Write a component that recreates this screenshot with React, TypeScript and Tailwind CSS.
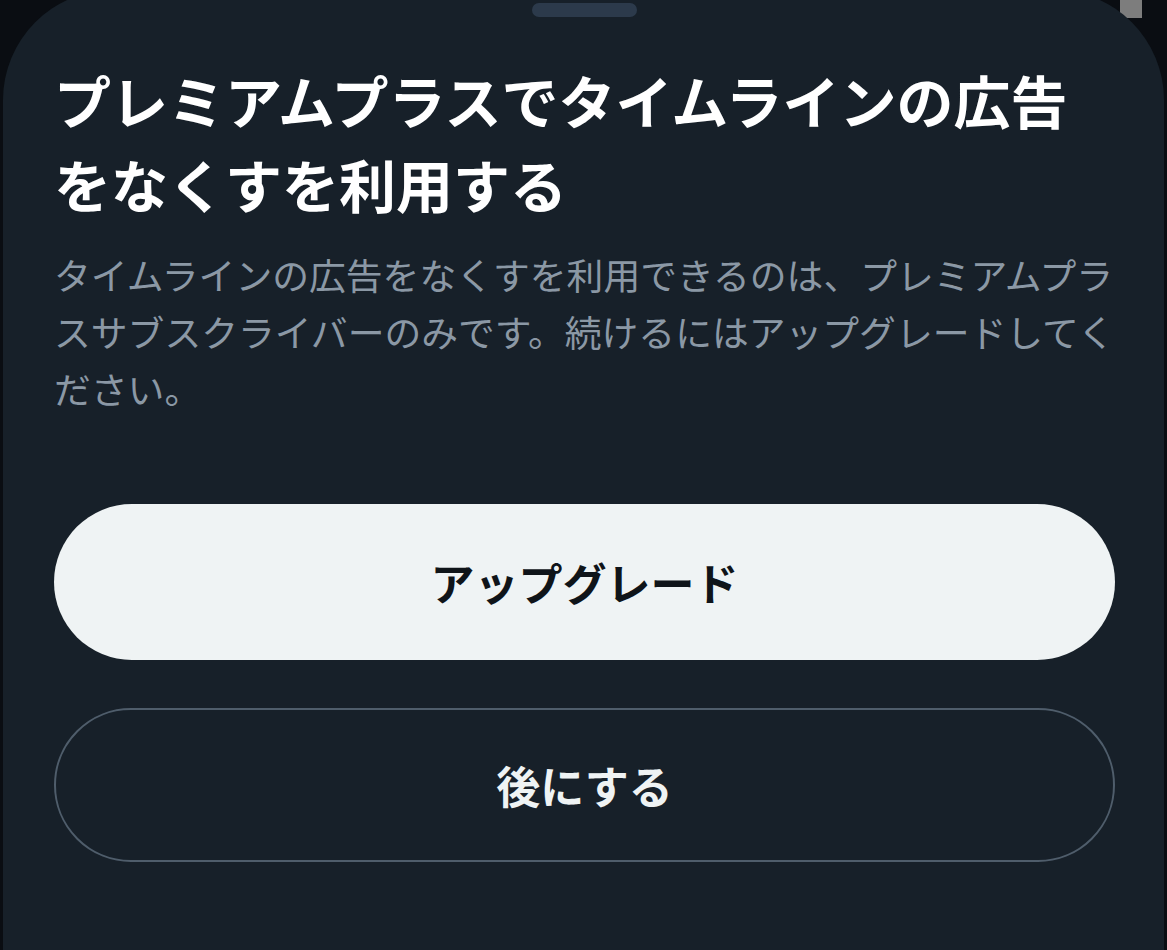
import React from "react";

export default function App() {
  const font = {
    fontFamily: '"Noto Sans CJK JP", "Noto Sans", sans-serif',
  } as React.CSSProperties;
  return (
    <div
      className="relative w-full h-[950px] overflow-hidden bg-[#0a0d12]"
      style={font}
    >
      <div className="absolute top-0 right-[25px] w-[22px] h-[18px] bg-[#7d7d7d]" />
      <div className="relative mx-[3px] mt-[-10px] h-[960px] rounded-t-[110px] bg-[#172029] pl-[51px] pr-[49px] flex flex-col">
        <div className="flex justify-center pt-[13px]">
          <div className="w-[105px] h-[14px] rounded-full bg-[#2c3a4b]" />
        </div>
        <h1 className="mt-[40px] text-[57px] leading-[84px] font-bold text-white">
          <span className="block whitespace-nowrap">
            プレミアムプラスでタイムラインの広告
          </span>
          <span className="block whitespace-nowrap">をなくすを利用する</span>
        </h1>
        <p className="mt-[21px] text-[36.8px] leading-[57px] text-[#8b98a5]">
          <span className="block whitespace-nowrap">
            タイムラインの広告をなくすを利用できるのは、プレミアムプラ
          </span>
          <span className="block whitespace-nowrap">
            スサブスクライバーのみです。続けるにはアップグレードしてく
          </span>
          <span className="block whitespace-nowrap">ださい。</span>
        </p>
        <button className="mt-[87px] h-[156px] w-full rounded-full bg-[#eff3f4] text-[#0f1419] text-[44px] font-bold flex items-center justify-center">
          アップグレード
        </button>
        <button className="mt-[48px] h-[154px] w-full rounded-full border-[2.5px] border-[#4f5d6b] bg-transparent text-[#eff3f4] text-[44px] font-bold flex items-center justify-center">
          後にする
        </button>
      </div>
    </div>
  );
}
